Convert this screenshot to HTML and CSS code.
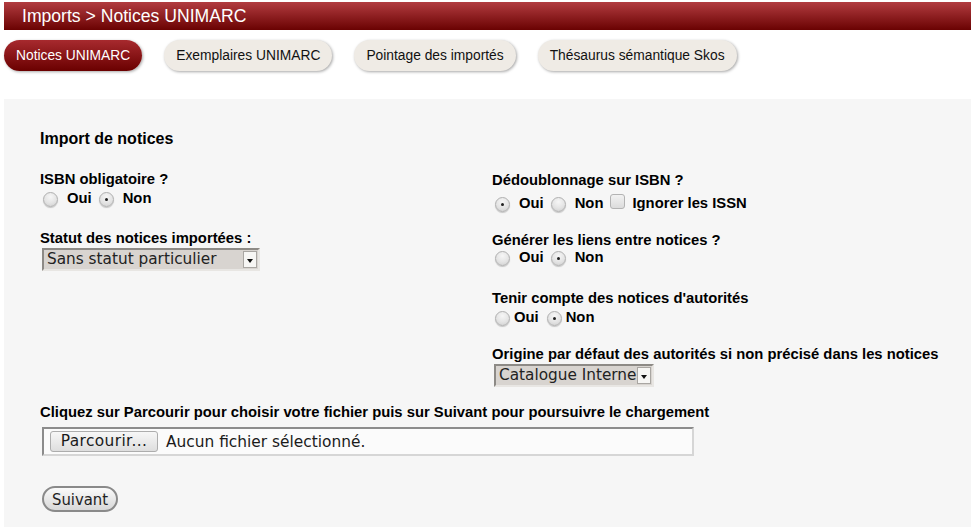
FILE: index.html
```html
<!DOCTYPE html>
<html lang="fr">
<head>
<meta charset="utf-8">
<title>Imports &gt; Notices UNIMARC</title>
<link rel="stylesheet" href="styles.css">
</head>
<body>
<div class="page">
  <header class="titlebar">Imports &gt; Notices UNIMARC</header>
  <nav class="tabs">
    <a class="tab active">Notices UNIMARC</a>
    <a class="tab">Exemplaires UNIMARC</a>
    <a class="tab">Pointage des importés</a>
    <a class="tab">Thésaurus sémantique Skos</a>
  </nav>
  <main class="panel">
    <h1 class="heading">Import de notices</h1>
    <div class="cols">
      <div class="col">
        <div class="field f-isbn">
          <div class="label">ISBN obligatoire ?</div>
          <div class="opts">
            <span class="radio"></span><span class="opt">Oui</span>
            <span class="radio on"></span><span class="opt">Non</span>
          </div>
        </div>
        <div class="field f-statut">
          <div class="label">Statut des notices importées :</div>
          <div class="select s-statut"><span class="val">Sans statut particulier</span><span class="arrow"></span></div>
        </div>
      </div>
      <div class="col">
        <div class="field f-dedoub">
          <div class="label">Dédoublonnage sur ISBN ?</div>
          <div class="opts">
            <span class="radio on"></span><span class="opt">Oui</span>
            <span class="radio"></span><span class="opt">Non</span>
            <span class="check"></span><span class="opt">Ignorer les ISSN</span>
          </div>
        </div>
        <div class="field f-liens">
          <div class="label">Générer les liens entre notices ?</div>
          <div class="opts">
            <span class="radio"></span><span class="opt">Oui</span>
            <span class="radio on"></span><span class="opt">Non</span>
          </div>
        </div>
        <div class="field f-auto">
          <div class="label">Tenir compte des notices d'autorités</div>
          <div class="opts tight">
            <span class="radio"></span><span class="opt">Oui</span>
            <span class="radio on"></span><span class="opt">Non</span>
          </div>
        </div>
        <div class="field f-origine">
          <div class="label">Origine par défaut des autorités si non précisé dans les notices</div>
          <div class="select s-origine"><span class="val">Catalogue Interne</span><span class="arrow"></span></div>
        </div>
      </div>
    </div>
    <div class="field f-file">
      <div class="label narrow">Cliquez sur Parcourir pour choisir votre fichier puis sur Suivant pour poursuivre le chargement</div>
      <div class="file"><span class="browse">Parcourir...</span><span class="none">Aucun fichier sélectionné.</span></div>
    </div>
    <button class="next">Suivant</button>
  </main>
</div>
</body>
</html>
```

FILE: styles.css
```css
html, body {
  margin: 0;
  padding: 0;
  background: #ffffff;
}
body {
  font-family: "Liberation Sans", Arial, sans-serif;
  color: #000;
  height: 527px;
  overflow: hidden;
}
.page {
  padding: 2px 0 0 4px;
}
.titlebar {
  height: 28px;
  line-height: 29px;
  padding-left: 18px;
  font-size: 17.6px;
  color: #fff;
  background: linear-gradient(#b23c40, #6a0202);
}
.tabs {
  display: flex;
  gap: 22px;
  margin-top: 10px;
  height: 32px;
}
.tab {
  display: block;
  height: 31px;
  line-height: 31px;
  padding: 0 12px;
  font-size: 13.8px;
  border-radius: 16px;
  background: #efebe5;
  color: #111;
  box-shadow: 1px 1px 3px rgba(0,0,0,0.35);
}
.tab.active {
  color: #fff;
  background: linear-gradient(#a72a2e, #6a0000);
}
.panel {
  margin-top: 27px;
  background: #f6f6f6;
  padding: 31px 0 0 36px;
  height: 398px;
}
.heading {
  margin: 0;
  font-size: 16px;
  line-height: 18px;
  font-weight: bold;
}
.cols {
  display: grid;
  grid-template-columns: 452px 1fr;
  margin-top: 23px;
}
.label {
  font-size: 14.8px;
  font-weight: bold;
  line-height: 17px;
  white-space: nowrap;
}
.opts {
  display: flex;
  align-items: center;
  font-size: 14.8px;
  font-weight: bold;
  height: 18px;
}
.radio {
  width: 15px;
  height: 15px;
  border-radius: 50%;
  box-sizing: border-box;
  border: 1px solid #b0b0b0;
  background: radial-gradient(circle at 50% 30%, #f6f6f6 0, #e4e4e4 55%, #cccccc 100%);
  box-shadow: 0 1px 1px rgba(0,0,0,0.2);
  margin: 2px 9px 0 3px;
  position: relative;
  flex: none;
}
.radio.on::after {
  content: "";
  position: absolute;
  left: 5px;
  top: 5px;
  width: 3px;
  height: 3px;
  border-radius: 50%;
  background: #222;
}
.opt + .radio {
  margin-left: 7px;
}
.check {
  width: 15px;
  height: 15px;
  box-sizing: border-box;
  border: 1px solid #b3b3b3;
  border-radius: 3px;
  background: linear-gradient(#f2f2f2, #dcdcdc);
  margin: -4px 7px 0 7px;
  flex: none;
}
.opts.tight .radio { margin-right: 4px; }
.opts.tight .opt + .radio { margin-left: 8px; }

.f-isbn .opts { margin-top: 1px; }
.f-statut { margin-top: 23px; }
.f-dedoub { margin-top: 1px; }
.f-dedoub .opts { margin-top: 5px; }
.f-liens { margin-top: 20px; }
.f-liens .opts { margin-top: -1px; }
.f-auto { margin-top: 24px; }
.f-auto .opts { margin-top: 1px; }
.f-origine { margin-top: 20px; }

.select {
  display: inline-flex;
  align-items: stretch;
  height: 23px;
  box-sizing: border-box;
  border: 2px solid;
  border-color: #8d8a86 #e8e6e3 #e8e6e3 #8d8a86;
  background: #d8d4d0;
  margin: 1px 0 0 2px;
  font-family: "DejaVu Sans", sans-serif;
  font-size: 15.3px;
  color: #222;
}
.select .val {
  padding: 0 0 0 3px;
  line-height: 19px;
  white-space: nowrap;
  overflow: hidden;
  flex: 1;
}
.s-statut { width: 218px; }
.s-origine { width: 160px; }
.select .arrow {
  width: 14px;
  margin: 1px 1px 1px 0;
  background: #f7f6f4;
  border: 1px solid #a9a6a2;
  box-sizing: border-box;
  position: relative;
  flex: none;
}
.select .arrow::after {
  content: "";
  position: absolute;
  left: 3px;
  top: 7px;
  border-left: 3px solid transparent;
  border-right: 3px solid transparent;
  border-top: 4px solid #111;
}
.f-file { margin-top: 17px; }
.narrow {
  font-family: "Liberation Sans Narrow", "Liberation Sans", Arial, sans-serif;
  font-size: 14.8px;
}
.file {
  display: flex;
  align-items: center;
  width: 652px;
  height: 29px;
  box-sizing: border-box;
  margin: 6px 0 0 2px;
  border: 2px solid;
  border-color: #8c8c8c #d6d6d6 #d6d6d6 #8c8c8c;
  background: #fbfbfb;
  font-family: "DejaVu Sans", sans-serif;
  font-size: 15.4px;
  color: #1a1a1a;
}
.browse {
  margin-left: 6px;
  width: 108px;
  text-align: center;
  height: 21px;
  line-height: 19px;
  box-sizing: border-box;
  border: 1px solid #adadad;
  border-radius: 3px;
  background: linear-gradient(#f7f7f7, #dedede);
  letter-spacing: 0.4px;
}
.none {
  margin-left: 8px;
}
.next {
  display: block;
  margin: 30px 0 0 2px;
  width: 76px;
  height: 26px;
  padding: 0;
  border: 2px solid #8a8a8a;
  border-radius: 13px;
  background: linear-gradient(#fafafa, #d8d8d8);
  font-family: "DejaVu Sans Condensed", "DejaVu Sans", sans-serif;
  font-stretch: condensed;
  font-size: 16.5px;
  color: #222;
}
```
